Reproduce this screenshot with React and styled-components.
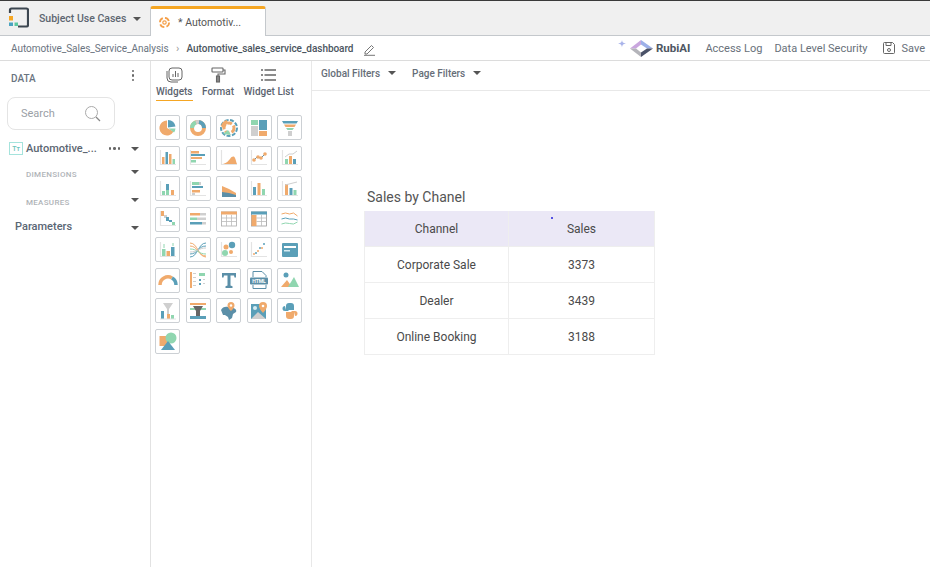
import React from "react";
import styled, { createGlobalStyle } from "styled-components";

const O = "#f0aa6c";
const T = "#5a9fb8";
const G = "#90d6b0";
const A = "#cfcfcf";
const D = "#5b8fa8";

const GlobalStyle = createGlobalStyle`
   html, body {
      margin: 0;
      padding: 0;
      background: #fff;
      font-family: Roboto, "Liberation Sans", sans-serif;
      color: #555;
   }
   * { box-sizing: border-box; }
`;

const Page = styled.div`
   width: 930px;
   height: 567px;
   overflow: hidden;
   display: flex;
   flex-direction: column;
   border-top: 1px solid #3a3a3a;
`;

const TopBar = styled.div`
   height: 35px;
   flex: none;
   display: flex;
   align-items: flex-end;
   background: #f0f0f0;
   border-bottom: 1px solid #c4c8cc;
`;
const LogoWrap = styled.div`
   width: 39px;
   height: 35px;
   padding: 7px 0 0 8px;
   flex: none;
`;
const Project = styled.div`
   width: 111px;
   height: 35px;
   flex: none;
   display: flex;
   align-items: center;
   justify-content: space-between;
   padding: 2px 9px 0 0;
   font-size: 10.5px;
   font-weight: 500;
   white-space: nowrap;
   color: #5d6670;
`;
const Caret = styled.i`
   display: block;
   width: 0;
   height: 0;
   border-left: 4px solid transparent;
   border-right: 4px solid transparent;
   border-top: 4px solid #555;
   flex: none;
   margin-top: ${(p) => p.$lift || 0}px;
`;
const Tab = styled.div`
   width: 116px;
   height: 30px;
   flex: none;
   margin-bottom: -1px;
   display: flex;
   align-items: center;
   gap: 7px;
   padding: 0 0 0 7px;
   background: #fff;
   border: 1px solid #c4c8cc;
   border-top: 3px solid #f5a623;
   border-bottom: 0;
   border-radius: 3px 3px 0 0;
   font-size: 10.5px;
   color: #555;
`;

const Crumbs = styled.div`
   height: 25px;
   flex: none;
   display: flex;
   align-items: center;
   padding: 0 5px 0 11px;
   border-bottom: 1px solid #dcdcdc;
   font-size: 10px;
`;
const Crumb = styled.span`
   color: ${(p) => (p.$strong ? "#4b5560" : "#6a7480")};
   font-weight: ${(p) => (p.$strong ? 500 : 400)};
   letter-spacing: -0.04px;
   white-space: nowrap;
`;
const Chevron = styled.span`
   width: 18px;
   text-align: center;
   color: #999;
   font-size: 11px;
   line-height: 1;
`;
const PenWrap = styled.span`
   margin-left: 10px;
   display: flex;
   padding-top: 3px;
`;
const RightTools = styled.div`
   margin-left: auto;
   display: flex;
   align-items: center;
`;
const RubiWrap = styled.div`
   display: flex;
   align-items: center;
   margin-right: 15px;
   font-size: 11.5px;
   font-weight: 700;
   color: #4e5662;
   gap: 1px;
`;
const ToolLink = styled.span`
   font-size: 11px;
   color: #68707a;
   margin-right: ${(p) => p.$gap || 0}px;
   display: flex;
   align-items: center;
   gap: 5px;
`;

const Body = styled.div`
   flex: 1;
   display: flex;
   min-height: 0;
`;
const DataPanel = styled.aside`
   width: 151px;
   flex: none;
   border-right: 1px solid #e2e2e2;
   padding: 0 0 0 7px;
`;
const DataHead = styled.div`
   height: 36px;
   display: flex;
   align-items: center;
   justify-content: space-between;
   padding: 0 16px 2px 4px;
   font-size: 10px;
   font-weight: 500;
   color: #6a7480;
`;
const Kebab = styled.span`
   display: flex;
   flex-direction: column;
   gap: 2px;
   margin-top: -5px;
   i {
      display: block;
      width: 2.5px;
      height: 2.5px;
      border-radius: 50%;
      background: #666;
   }
`;
const SearchBox = styled.div`
   width: 108px;
   height: 33px;
   display: flex;
   align-items: center;
   justify-content: space-between;
   padding: 0 12px 0 13px;
   border: 1px solid #e4e4e4;
   border-radius: 8px;
   font-size: 11px;
   color: #9aa0a6;
`;
const TreeRow = styled.div`
   height: ${(p) => p.$h}px;
   display: flex;
   align-items: center;
   justify-content: space-between;
   padding: 0 11px 0 ${(p) => p.$indent || 0}px;
`;
const TreeName = styled.span`
   display: flex;
   align-items: center;
   gap: 3px;
   font-size: 11px;
   font-weight: 500;
   color: #5c6672;
`;
const TypeBadge = styled.span`
   width: 14px;
   height: 13px;
   border: 1px solid #a5e3dc;
   color: #6cc5bb;
   font-size: 7px;
   display: flex;
   align-items: center;
   justify-content: center;
   margin-left: 2px;
`;
const RowEnd = styled.span`
   display: flex;
   align-items: center;
   gap: 11px;
`;
const Dots = styled.span`
   display: flex;
   gap: 2px;
   i {
      display: block;
      width: 2.5px;
      height: 2.5px;
      border-radius: 50%;
      background: #666;
   }
`;
const SubLabel = styled.span`
   font-size: 8px;
   font-weight: 500;
   letter-spacing: 0.3px;
   color: #b0b4b8;
`;
const ParamLabel = styled.span`
   font-size: 11px;
   font-weight: 500;
   color: #5a6674;
   padding-left: 8px;
   margin-top: -2px;
`;

const WidgetPanel = styled.aside`
   width: 161px;
   flex: none;
   border-right: 1px solid #e8e8e8;
`;
const PanelTabs = styled.div`
   display: flex;
   padding: 6px 0 0 5px;
   gap: 9.5px;
   height: 54px;
   align-items: flex-start;
`;
const PanelTab = styled.div`
   display: flex;
   flex-direction: column;
   align-items: center;
   font-size: 10px;
   font-weight: 500;
   white-space: nowrap;
   color: #5c6470;
   span {
      margin-top: 3px;
      padding-bottom: 3px;
      border-bottom: 1px solid ${(p) => (p.$active ? "#f5a623" : "transparent")};
   }
`;
const WidgetGrid = styled.div`
   display: grid;
   grid-template-columns: repeat(5, 25px);
   grid-auto-rows: 25px;
   gap: 5.5px;
   padding-left: 4px;
`;
const WidgetTile = styled.div`
   width: 25px;
   height: 25px;
   border: 1px solid #ccd0d4;
   border-radius: 2px;
   background: #fff;
   display: flex;
   align-items: center;
   justify-content: center;
   svg { display: block; }
`;

const Main = styled.main`
   flex: 1;
   min-width: 0;
`;
const FilterBar = styled.div`
   height: 30px;
   display: flex;
   align-items: center;
   gap: 16px;
   padding: 0 0 5px 9px;
   border-bottom: 1px solid #e8e8e8;
`;
const FilterItem = styled.span`
   display: flex;
   align-items: center;
   gap: 8px;
   font-size: 10px;
   font-weight: 500;
   color: #666e78;
`;
const Canvas = styled.div`
   padding: 97px 0 0 52px;
`;
const WidgetTitle = styled.div`
   font-size: 14px;
   color: #555;
   padding-left: 3px;
   height: 23px;
   line-height: 18px;
`;
const Table = styled.div`
   width: 291px;
   position: relative;
   display: grid;
   grid-template-columns: 144px 1fr;
   border-right: 1px solid #eee;
   border-left: 1px solid #eee;
`;
const Cell = styled.div`
   height: 36px;
   display: flex;
   align-items: center;
   justify-content: center;
   font-size: 12px;
   color: #4a4a4a;
   background: ${(p) => (p.$head ? "#ebe8f6" : "#fff")};
   border-bottom: 1px solid #eee;
   border-right: ${(p) => (p.$first ? "1px solid #eee" : "0")};
`;
const CursorDot = styled.i`
   position: absolute;
   left: 186px;
   top: 6px;
   width: 2px;
   height: 2px;
   border-radius: 50%;
   background: #2222dd;
`;

const LogoMark = () => (
   <svg width="21" height="21" viewBox="0 0 21 21">
      <path d="M2 6V3a1.5 1.5 0 0 1 1.5-1.5h15A1.5 1.5 0 0 1 20 3v15a1.5 1.5 0 0 1-1.5 1.5H10" fill="none" stroke="#3c4650" strokeWidth="2.2" />
      <rect x="1" y="9" width="4" height="4.5" fill="#f5a623" />
      <rect x="1" y="15.500" width="4" height="3.500" fill="#4aa3c0" />
      <rect x="6.500" y="15.500" width="3.500" height="3.500" fill="#5cc8a0" />
   </svg>
);
const TabIcon = () => (
   <svg width="13" height="13" viewBox="0 0 13 13" fill="none" stroke="#f5a04a">
      <circle cx="6.5" cy="6.5" r="4.6" strokeWidth="1.8" strokeDasharray="5 2.2" />
      <circle cx="6.5" cy="6.5" r="1.7" strokeWidth="1.2" />
   </svg>
);
const Pen = () => (
   <svg width="13" height="13" viewBox="0 0 13 13" fill="none" stroke="#666" strokeWidth="0.9">
      <path d="M2 9l6.5-6.5 2 2L4 11H2z" />
      <path d="M1 12.3h11" />
   </svg>
);
const RubiLogo = () => (
   <svg width="38" height="21" viewBox="0 0 38 21">
      <path d="M5 2c.4 2.400 1 3.100 4 3.500C6 6.100 5.400 6.800 5 9.500 4.600 6.800 4 6.100 1 5.500 4 5.100 4.600 4.400 5 2z" fill="#a9b4ea" />
      <path d="M13 10.500L24 2v4.500l-5 4z" fill="#c9a6de" />
      <path d="M24 2l12 8.500h-6l-6-4z" fill="#9db0e8" />
      <path d="M13 10.500h6l5 4V19z" fill="#b4b4ba" />
      <path d="M36 10.500L24 19v-4.500l6-4z" fill="#4a5268" />
   </svg>
);
const SaveIcon = () => (
   <svg width="14" height="14" viewBox="0 0 14 14" fill="none" stroke="#666" strokeWidth="1">
      <path d="M1.500 2.500a1 1 0 0 1 1-1h8l2 2v8a1 1 0 0 1-1 1h-9a1 1 0 0 1-1-1z" />
      <path d="M4 1.500v3h5v-3" />
      <circle cx="7" cy="9" r="1.500" />
   </svg>
);
const SearchIcon = () => (
   <svg width="18" height="18" viewBox="0 0 18 18" fill="none">
      <circle cx="7.500" cy="7.500" r="6" stroke="#aaa" strokeWidth="1" />
      <path d="M12 12l4 4" stroke="#888" strokeWidth="1.200" />
   </svg>
);
const WidgetsTabIcon = () => (
   <svg width="17" height="16" viewBox="0 0 17 16" fill="none" stroke="#666" strokeWidth="1">
      <rect x="3" y="1" width="13" height="12" rx="3" />
      <path d="M1 4v7a4 4 0 0 0 4 4h7" />
      <path d="M7 10V7M9.500 10V4M12 10V6" />
   </svg>
);
const FormatTabIcon = () => (
   <svg width="15" height="16" viewBox="0 0 15 16" fill="none" stroke="#666" strokeWidth="1.100">
      <rect x="1" y="1" width="11" height="4" rx="0.500" />
      <path d="M12 3h2v4H7v2" />
      <rect x="5.500" y="9" width="3" height="6" fill="#888" />
   </svg>
);
const ListTabIcon = () => (
   <svg width="15" height="16" viewBox="0 0 15 16" stroke="#666" strokeWidth="1.300">
      <path d="M0 3h2M3.500 3H15M0 8h2M3.500 8H15M0 13h2M3.500 13H15" />
   </svg>
);

const Bars = ({ items }) => items.map(([x, y, w, h, c], i) => <rect key={i} x={x} y={y} width={w} height={h} fill={c} />);
const Axis = () => <path d="M2.500 2v14.500H18" fill="none" stroke="#e3e3e3" strokeWidth="1.200" />;

// one drawing per chart type, in the order of the grid
const widgets = [
   <><path d="M9 2.500A7.500 7.500 0 1 0 15.500 13.500L9 10z" fill={O} /><path d="M10 2a8 8 0 0 1 7.500 6.500L10 9.500z" fill={T} /><path d="M10.500 10.500l7 0a8 8 0 0 1-1.500 4z" fill={G} /></>,
   <><circle cx="10" cy="10" r="6" fill="none" stroke={O} strokeWidth="4" /><path d="M4 10a6 6 0 0 1 4-5.700" fill="none" stroke={G} strokeWidth="4" /><path d="M8 4.300a6 6 0 0 1 3-.3" fill="none" stroke={A} strokeWidth="4" /><path d="M11 4a6 6 0 0 1 5 6" fill="none" stroke={T} strokeWidth="4" /></>,
   <><circle cx="10" cy="10" r="8" fill="none" stroke={T} strokeWidth="2" strokeDasharray="4 1.500" /><circle cx="10" cy="10" r="5" fill="none" stroke={O} strokeWidth="3" strokeDasharray="5 2" /><path d="M4 16l5-4 3 5z" fill={G} /><path d="M2 8a8 8 0 0 1 6-6l1 3-5 5z" fill={O} /></>,
   <Bars items={[[2, 2, 7, 5, G], [10, 2, 8, 10, T], [2, 8, 7, 10, A], [10, 13, 8, 5, O]]} />,
   <><path d="M2 3h16l-1.500 2.500h-13z" fill={T} /><path d="M4 6.500h12l-1.500 2.500h-9z" fill={O} /><path d="M6 10h8l-1.500 2h-5z" fill={G} /><rect x="8" y="13" width="4" height="5" fill={A} /></>,
   <><Axis /><Bars items={[[4, 9, 2.500, 7, O], [7.500, 4, 2.500, 12, T], [11, 6, 2.500, 10, O], [14.500, 11, 2.500, 5, G]]} /></>,
   <><Axis /><Bars items={[[3, 3, 8, 2.500, O], [3, 6, 14, 2, T], [3, 9, 11, 2, O], [3, 12, 5, 2.500, G]]} /></>,
   <><Axis /><path d="M4 16c4-1 5-3 7-5 2-3 4-3 5-1 1 2 1 4 2 6z" fill={O} /></>,
   <><Axis /><path d="M4 13l4-4 4 1 5-5" fill="none" stroke={D} strokeWidth="1" /><circle cx="5" cy="12" r="1.800" fill={O} /><circle cx="9" cy="9" r="1.800" fill={O} /><circle cx="12" cy="10" r="1.800" fill={O} /><circle cx="16" cy="6" r="1.800" fill={O} /></>,
   <><Axis /><Bars items={[[5, 11, 3, 5, G], [9, 8, 3, 8, O], [13, 11, 3, 5, T]]} /><path d="M5 9l4-3 4 0 4-3" fill="none" stroke={A} /></>,
   <><Axis /><Bars items={[[4, 12, 3, 4, G], [8, 5, 3, 6, T], [8, 11, 3, 5, G], [13, 11, 3, 5, O]]} /></>,
   <><Axis /><Bars items={[[4, 3, 7, 3, G], [11, 3, 2, 3, A], [4, 7, 11, 2, T], [4, 11, 8, 2.500, O], [4, 14, 3, 2, A]]} /></>,
   <><path d="M3 3v6l14 6v3H3z" fill={T} /><path d="M3 7l7 3 7 4v4H3z" fill={O} /><path d="M3 13l7 1 7 2v2H3z" fill={D} /></>,
   <><Axis /><Bars items={[[4, 8, 3, 8, T], [8.500, 4, 3, 12, O], [13, 10, 3, 6, G]]} /></>,
   <><Axis /><Bars items={[[5, 5, 3, 11, O], [9.500, 9, 3, 7, T], [13.500, 11, 3, 5, G]]} /><path d="M5 6l12-3" fill="none" stroke={A} /></>,
   <><Axis /><Bars items={[[3, 2, 3, 5, O], [6, 6, 3, 3, A], [8, 8, 3, 4, T], [11, 11, 3, 2, T], [14, 13, 3, 3, G]]} /></>,
   <Bars items={[[2, 4, 10, 2.500, O], [12, 4, 6, 2.500, A], [2, 8.500, 7, 2.500, G], [9, 8.500, 9, 2.500, A], [2, 13, 12, 2.500, T], [14, 13, 4, 2.500, A]]} />,
   <><rect x="2.500" y="3" width="15" height="14" fill="#fff" stroke="#aaa" strokeWidth="0.800" /><rect x="2" y="2.500" width="16" height="3" fill={O} /><path d="M2.500 9h15M2.500 12.500h15M7.500 6v11M12.500 6v11" stroke="#bbb" strokeWidth="0.800" /></>,
   <><rect x="2.500" y="3" width="15" height="14" fill="#fff" stroke="#999" strokeWidth="0.800" /><rect x="2.500" y="6" width="5" height="11" fill={O} /><rect x="2" y="2.500" width="16" height="3" fill={T} /><path d="M7.500 9h10M7.500 12.500h10M12.500 6v11" stroke="#bbb" strokeWidth="0.800" /></>,
   <g fill="none" strokeWidth="1"><path d="M1.500 5l4-1 4 1 4-1 4 3" stroke={O} /><path d="M1.500 10l4-1 4 1 4 0 4 1" stroke={T} /><path d="M1.500 15l4-1 4 .5 4 .5 4-2" stroke={G} /></g>,
   <><Axis /><Bars items={[[4, 9, 3.500, 7, G], [8.500, 11, 3.500, 5, O], [13, 7, 3.500, 9, T]]} /><path d="M6 8V4M15 6V3" stroke={G} /></>,
   <g fill="none" strokeWidth="1"><path d="M2 3c8 0 8 14 16 14" stroke={O} /><path d="M2 6c8 0 8 10 16 10" stroke={O} /><path d="M2 17c8 0 8-14 16-14" stroke={T} /><path d="M2 14c8 0 8-8 16-8" stroke={T} /><path d="M2 9c8 0 8 5 16 5" stroke={G} /><path d="M2 12c8 0 8-4 16-4" stroke={A} /></g>,
   <><Axis /><circle cx="7" cy="7" r="2.500" fill={O} /><circle cx="13" cy="5" r="3.200" fill={T} /><circle cx="6" cy="13" r="3" fill={G} /><circle cx="12" cy="12" r="2" fill={O} /></>,
   <><Axis /><g fill={O}><circle cx="5" cy="14" r="1" /><circle cx="9" cy="11" r="1" /><circle cx="13" cy="8" r="1" /></g><g fill={T}><circle cx="7" cy="13" r="1" /><circle cx="11" cy="8" r="1" /><circle cx="15" cy="4" r="1" /></g></>,
   <><rect x="2" y="3" width="16" height="14" rx="1" fill={T} /><rect x="4" y="6" width="12" height="2" fill="#fff" /><rect x="4" y="10" width="6" height="1.500" fill="#d6ecf2" /></>,
   <><path d="M2 15a8 8 0 0 1 12-7" fill="none" stroke={O} strokeWidth="3.500" /><path d="M14 8a8 8 0 0 1 4 7" fill="none" stroke={T} strokeWidth="3.500" /></>,
   <><Bars items={[[2, 2, 2, 16, O], [5, 3, 3, 1, A], [5, 7, 3, 1, A], [5, 11, 3, 1, A], [5, 15, 3, 1, A], [11, 3, 6, 3, G], [11, 9, 2, 2, T], [15, 9, 2, 1, A], [11, 13, 2, 2, T], [15, 13, 2, 1, A]]} /></>,
   <path d="M3 3h14v4.500h-1.500L15 5.500h-3.500v10l2 .8V18h-7v-1.700l2-.8v-10H5l-.5 2H3z" fill={D} />,
   <><path d="M4 7V1.500h9l4 4V7M4 15v3.500h13V15" fill="none" stroke={D} /><rect x="1" y="7.500" width="18" height="7" rx="1" fill={D} /><text x="10" y="13" textAnchor="middle" fontSize="5" fontWeight="700" fill="#fff" fontFamily="Roboto, sans-serif">HTML</text></>,
   <><circle cx="6" cy="5" r="2.500" fill={T} /><path d="M1 17l6-7 5 7z" fill={O} /><path d="M8 17l6-10 5 10z" fill={G} /></>,
   <><path d="M5 2h10l-4 6v8H9V8z" fill={A} /><Bars items={[[3, 10, 3, 8, T], [9, 13, 3, 5, O], [13, 14, 3, 4, G]]} /><path d="M2 18h16" stroke="#e3e3e3" /></>,
   <><Bars items={[[2, 2, 16, 2, O], [2, 7, 16, 2, G], [2, 15, 16, 3, T]]} /><path d="M5 5h10l-3 5v5H8v-5z" fill="#666" /></>,
   <><path d="M2 9c1-3 5-4 7-3l4 1c3 0 5 2 4 4l-3 2-1 4-3 2-1-3-3-2H4z" fill={D} /><path d="M12 1a3.500 3.500 0 0 1 3.500 3.500C15.500 7 12 10 12 10S8.500 7 8.500 4.500A3.500 3.500 0 0 1 12 1z" fill={O} /><circle cx="12" cy="4.500" r="1.200" fill="#fff" /></>,
   <><rect x="2" y="3" width="15" height="15" fill={T} /><path d="M2 18l7-7 8 7z" fill={A} /><path d="M14 1a4 4 0 0 1 4 4c0 3-4 7-4 7s-4-4-4-7a4 4 0 0 1 4-4z" fill={O} /><circle cx="14" cy="5" r="1.300" fill="#fff" /><circle cx="6" cy="7" r="2" fill="#d6ecf2" /></>,
   <><path d="M6 9V5a3 3 0 0 1 3-3h2a3 3 0 0 1 3 3v4H8.500v1H5a2.500 2.500 0 0 1 0-5" fill={T} /><path d="M14 11v4a3 3 0 0 1-3 3H9a3 3 0 0 1-3-3v-4h5.500v-1H15a2.500 2.500 0 0 1 0 5" fill={O} /></>,
   <><rect x="1.500" y="5" width="10" height="10" fill={O} /><circle cx="13" cy="7" r="5.500" fill={G} /><path d="M3 19l7-9 7 9z" fill={T} /></>,
];

const rows = [
   ["Corporate Sale", 3373],
   ["Dealer", 3439],
   ["Online Booking", 3188],
];

export default function App() {
   return (
      <Page>
         <GlobalStyle />
         <TopBar>
            <LogoWrap><LogoMark /></LogoWrap>
            <Project>Subject Use Cases<Caret /></Project>
            <Tab><TabIcon />* Automotiv...</Tab>
         </TopBar>
         <Crumbs>
            <Crumb>Automotive_Sales_Service_Analysis</Crumb>
            <Chevron>›</Chevron>
            <Crumb $strong>Automotive_sales_service_dashboard</Crumb>
            <PenWrap><Pen /></PenWrap>
            <RightTools>
               <RubiWrap><RubiLogo />RubiAI</RubiWrap>
               <ToolLink $gap={12}>Access Log</ToolLink>
               <ToolLink $gap={15}>Data Level Security</ToolLink>
               <ToolLink><SaveIcon />Save</ToolLink>
            </RightTools>
         </Crumbs>
         <Body>
            <DataPanel>
               <DataHead>DATA<Kebab><i /><i /><i /></Kebab></DataHead>
               <SearchBox>Search<SearchIcon /></SearchBox>
               <TreeRow $h={37}>
                  <TreeName><TypeBadge>Tт</TypeBadge>Automotive_...</TreeName>
                  <RowEnd><Dots><i /><i /><i /></Dots><Caret /></RowEnd>
               </TreeRow>
               <TreeRow $h={14} $indent={19}><SubLabel>DIMENSIONS</SubLabel><Caret $lift={-5} /></TreeRow>
               <TreeRow $h={42} $indent={19}><SubLabel>MEASURES</SubLabel><Caret $lift={-5} /></TreeRow>
               <TreeRow $h={9}><ParamLabel>Parameters</ParamLabel><Caret /></TreeRow>
            </DataPanel>
            <WidgetPanel>
               <PanelTabs>
                  <PanelTab $active><WidgetsTabIcon /><span>Widgets</span></PanelTab>
                  <PanelTab><FormatTabIcon /><span>Format</span></PanelTab>
                  <PanelTab><ListTabIcon /><span>Widget List</span></PanelTab>
               </PanelTabs>
               <WidgetGrid>
                  {widgets.map((w, i) => (
                     <WidgetTile key={i}><svg width="20" height="20" viewBox="0 0 20 20">{w}</svg></WidgetTile>
                  ))}
               </WidgetGrid>
            </WidgetPanel>
            <Main>
               <FilterBar>
                  <FilterItem>Global Filters<Caret /></FilterItem>
                  <FilterItem>Page Filters<Caret /></FilterItem>
               </FilterBar>
               <Canvas>
                  <WidgetTitle>Sales by Chanel</WidgetTitle>
                  <Table>
                     <Cell $head $first>Channel</Cell>
                     <Cell $head>Sales</Cell>
                     {rows.map(([name, sales]) => (
                        <React.Fragment key={name}>
                           <Cell $first>{name}</Cell>
                           <Cell>{sales}</Cell>
                        </React.Fragment>
                     ))}
                     <CursorDot />
                  </Table>
               </Canvas>
            </Main>
         </Body>
      </Page>
   );
}
